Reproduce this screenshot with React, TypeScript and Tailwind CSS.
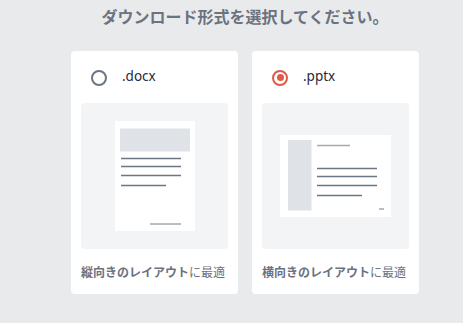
import React from "react";

const jp = { fontFamily: '"Noto Sans CJK JP", "Noto Sans", sans-serif' };

function Portrait() {
  return (
    <svg width="80" height="110" viewBox="0 0 80 110">
      <rect x="0" y="0" width="80" height="110" fill="#ffffff" />
      <rect x="5" y="7.5" width="70" height="23" fill="#dfe2e6" />
      <g stroke="#6b7785" strokeWidth="1.5">
        <line x1="6" y1="37.5" x2="66" y2="37.5" />
        <line x1="6" y1="45.5" x2="66" y2="45.5" />
        <line x1="6" y1="54.5" x2="66" y2="54.5" />
        <line x1="6" y1="64.5" x2="51" y2="64.5" />
      </g>
      <line x1="35" y1="103" x2="66" y2="103" stroke="#a3a9b0" strokeWidth="1.5" />
    </svg>
  );
}

function Landscape() {
  return (
    <svg width="111" height="82" viewBox="0 0 111 82">
      <rect x="0" y="0" width="111" height="82" fill="#ffffff" />
      <rect x="8" y="5" width="23.5" height="70.5" fill="#dfe2e6" />
      <line x1="37" y1="10.5" x2="70" y2="10.5" stroke="#a3a9b0" strokeWidth="1.5" />
      <g stroke="#6b7785" strokeWidth="1.5">
        <line x1="37" y1="33.5" x2="97" y2="33.5" />
        <line x1="37" y1="41.5" x2="97" y2="41.5" />
        <line x1="37" y1="50.5" x2="97" y2="50.5" />
        <line x1="37" y1="60.5" x2="82" y2="60.5" />
      </g>
      <line x1="99" y1="74" x2="104" y2="74" stroke="#a3a9b0" strokeWidth="1.5" />
    </svg>
  );
}

function Card({
  selected,
  label,
  strong,
  children,
}: {
  selected: boolean;
  label: string;
  strong: string;
  children: React.ReactNode;
}) {
  return (
    <div className="flex w-[167px] h-[243px] flex-col rounded-[4px] bg-white">
      <div className="flex h-[52px] items-center gap-[15px] pl-[20px] pt-[1px]">
        {selected ? (
          <span className="flex h-[16px] w-[16px] items-center justify-center rounded-full border-[2px] border-[#e05a48]">
            <span className="h-[7px] w-[7px] rounded-full bg-[#e05a48]" />
          </span>
        ) : (
          <span className="h-[16px] w-[16px] rounded-full border-[2px] border-[#6b7684]" />
        )}
        <span
          className="text-[13.5px] leading-[20px] text-[#1f2a3a] -mt-[3px]"
          style={{ fontFamily: '"Noto Sans", sans-serif' }}
        >
          {label}
        </span>
      </div>
      <div className="mx-[10px] flex h-[146px] items-center justify-center rounded-[4px] bg-[#f3f4f6]">
        {children}
      </div>
      <div className="flex flex-1 items-center px-[10px] text-[12px] leading-[16px] text-[#6b7280]" style={jp}>
        <span className="font-bold">{strong}</span>
        <span>に最適</span>
      </div>
    </div>
  );
}

export default function App() {
  return (
    <div className="h-[323px] w-[463px] overflow-hidden bg-[#e9eaec]">
      <div className="ml-[71px] w-[348px]">
        <div
          className="pt-[6px] text-center text-[16px] font-bold leading-[20px] text-[#6b7280] whitespace-nowrap"
          style={jp}
        >
          ダウンロード形式を選択してください。
        </div>
        <div className="mt-[25px] flex gap-[14px]">
          <Card selected={false} label=".docx" strong="縦向きのレイアウト">
            <Portrait />
          </Card>
          <Card selected={true} label=".pptx" strong="横向きのレイアウト">
            <Landscape />
          </Card>
        </div>
      </div>
    </div>
  );
}
